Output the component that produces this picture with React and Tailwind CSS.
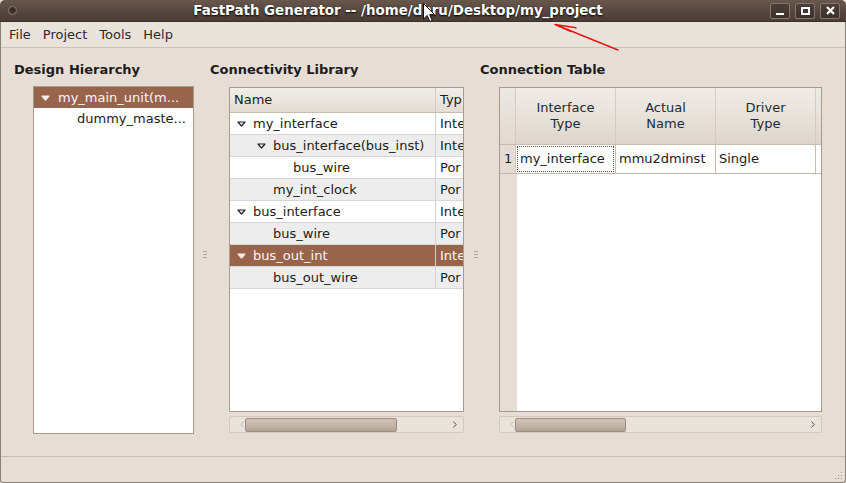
import React from "react";

function Tri({ white }) {
  return (
    <svg width="9" height="6" viewBox="0 0 9 6" className="shrink-0">
      <path d="M1 1H8L4.5 5Z" fill={white ? "#f4ece8" : "#ffffff"} stroke={white ? "#f4ece8" : "#1e1e1e"} strokeWidth="1.2" strokeLinejoin="round" />
    </svg>
  );
}

function Grip() {
  return (
    <div className="flex flex-col gap-[2px]">
      <div className="w-[4px] h-[1px] bg-[#b5a597]" />
      <div className="w-[4px] h-[1px] bg-[#b5a597]" />
      <div className="w-[4px] h-[1px] bg-[#b5a597]" />
    </div>
  );
}

function HScroll({ thumb, width }) {
  return (
    <div className={`mt-[4px] ml-[19px] h-[17px] rounded-[2px] border border-[#d3c9bf] bg-[#e9e3dc] flex items-center ${width}`}>
      <svg width="4" height="7" viewBox="0 0 4 7" className="ml-[10px] shrink-0">
        <path d="M3.5 0.5L0.8 3.5L3.5 6.5" fill="none" stroke="#c9bdb2" strokeWidth="1" />
      </svg>
      <div className={`ml-[1px] h-[14px] rounded-[2px] border border-[#9d8d80] bg-linear-to-b from-[#cfc3b8] via-[#c4b6a9] to-[#b4a497] ${thumb}`} />
      <div className="flex-1" />
      <svg width="4" height="7" viewBox="0 0 4 7" className="mr-[6px] shrink-0">
        <path d="M0.5 0.5L3.2 3.5L0.5 6.5" fill="none" stroke="#5e544c" strokeWidth="1" />
      </svg>
    </div>
  );
}

const libRows = [
  { lvl: 0, tri: true, name: "my_interface", type: "Inte" },
  { lvl: 1, tri: true, name: "bus_interface(bus_inst)", type: "Inte" },
  { lvl: 2, tri: false, name: "bus_wire", type: "Por" },
  { lvl: 1, tri: false, name: "my_int_clock", type: "Por" },
  { lvl: 0, tri: true, name: "bus_interface", type: "Inte" },
  { lvl: 1, tri: false, name: "bus_wire", type: "Por" },
  { lvl: 0, tri: true, name: "bus_out_int", type: "Inte", sel: true },
  { lvl: 1, tri: false, name: "bus_out_wire", type: "Por" },
];

const triIndent = ["pl-[7px]", "pl-[27px]", "pl-[47px]"];
const leafIndent = ["pl-[23px]", "pl-[43px]", "pl-[63px]"];

export default function App() {
  return (
    <div className="relative w-[846px] h-[483px] overflow-hidden flex flex-col bg-[#e6ded5] text-[13px] text-[#1c1c1c] font-['DejaVu_Sans','Liberation_Sans',sans-serif]">
      {/* Title bar */}
      <div className="h-[22px] shrink-0 flex items-center bg-linear-to-b from-[#68574c] via-[#574840] to-[#4a3d36] rounded-t-[5px] border-b border-[#3b302a]">
        <div className="w-[22px] pl-[8px] flex items-center">
          <div className="w-[9px] h-[9px] rounded-full border border-[#8a7b72] bg-linear-to-b from-[#2e2521] to-[#463a33]" />
        </div>
        <div className="flex-1 pl-[4px] text-center font-bold text-[13.4px] leading-[22px] text-white [text-shadow:0_1px_2px_#000]">
          FastPath Generator -- /home/dhru/Desktop/my_project
        </div>
        <div className="flex gap-[5px] pr-[6px]">
          <div className="w-[20px] h-[16px] rounded-[2px] border border-[#86776d] bg-linear-to-b from-[#4b3e37] to-[#3c312b] flex items-end justify-center pb-[3px]">
            <div className="w-[8px] h-[2px] bg-white" />
          </div>
          <div className="w-[20px] h-[16px] rounded-[2px] border border-[#86776d] bg-linear-to-b from-[#4b3e37] to-[#3c312b] flex items-center justify-center">
            <div className="w-[9px] h-[8px] border-2 border-white" />
          </div>
          <div className="w-[20px] h-[16px] rounded-[2px] border border-[#86776d] bg-linear-to-b from-[#4b3e37] to-[#3c312b] flex items-center justify-center">
            <svg width="9" height="9" viewBox="0 0 9 9">
              <path d="M1 1L8 8M8 1L1 8" stroke="#fff" strokeWidth="2.2" />
            </svg>
          </div>
        </div>
      </div>

      <div className="flex-1 flex flex-col border-x border-b border-[#8c7f75] rounded-b-[3px]">
        {/* Menu bar */}
        <div className="h-[26px] shrink-0 flex items-center pl-[8px] gap-[12px] bg-[#e9e3dc] border-b border-[#cdc2b6] text-[#2b2b2b]">
          <span>File</span>
          <span>Project</span>
          <span>Tools</span>
          <span>Help</span>
        </div>

        {/* Main */}
        <div className="flex-1 flex">
          {/* Design Hierarchy */}
          <div className="w-[199px] pl-[13px] pt-[14px] flex flex-col">
            <div className="h-[16px] leading-[16px] font-bold">Design Hierarchy</div>
            <div className="mt-[8px] ml-[19px] w-[161px] h-[348px] border border-[#ab9a8b] bg-white flex flex-col">
              <div className="h-[21px] flex items-center pl-[7px] gap-[8px] bg-[#98644c] text-[#fbf5f2] whitespace-nowrap">
                <Tri white />
                <span>my_main_unit(m...</span>
              </div>
              <div className="h-[21px] flex items-center pl-[43px] whitespace-nowrap">dummy_maste...</div>
            </div>
          </div>

          <div className="w-[10px] flex items-center justify-center pt-[4px]">
            <Grip />
          </div>

          {/* Connectivity Library */}
          <div className="w-[262px] pt-[14px] flex flex-col">
            <div className="h-[16px] leading-[16px] font-bold">Connectivity Library</div>
            <div className="mt-[9px] ml-[19px] w-[235px] h-[325px] border border-[#ab9a8b] bg-white flex flex-col overflow-hidden">
              <div className="h-[25px] shrink-0 flex border-b border-[#c7bcb1] bg-linear-to-b from-[#f1ede8] to-[#e4ddd5]">
                <div className="w-[206px] pl-[4px] flex items-center border-r border-[#d2c8be]">Name</div>
                <div className="flex-1 pl-[4px] flex items-center overflow-hidden whitespace-nowrap">Typ</div>
              </div>
              {libRows.map((r, i) => (
                <div
                  key={i}
                  className={`h-[22px] shrink-0 flex border-b border-[#d6d6d6] whitespace-nowrap ${
                    r.sel ? "bg-[#98644c] text-[#fbf5f2]" : i % 2 === 0 ? "bg-white" : "bg-[#ededed]"
                  }`}
                >
                  <div className={`w-[206px] flex items-center gap-[7px] border-r border-[#d2d2d2] ${r.tri ? triIndent[r.lvl] : leafIndent[r.lvl]}`}>
                    {r.tri && <Tri white={r.sel} />}
                    <span>{r.name}</span>
                  </div>
                  <div className="flex-1 pl-[4px] flex items-center overflow-hidden">{r.type}</div>
                </div>
              ))}
              <div className="flex-1 bg-white" />
            </div>
            <HScroll thumb="w-[152px]" width="w-[235px]" />
          </div>

          <div className="w-[8px] flex items-center justify-center pt-[4px]">
            <Grip />
          </div>

          {/* Connection Table */}
          <div className="flex-1 pt-[14px] flex flex-col">
            <div className="h-[16px] leading-[16px] font-bold">Connection Table</div>
            <div className="mt-[9px] ml-[19px] w-[323px] h-[325px] border border-[#ab9a8b] flex flex-col overflow-hidden bg-[#e6ded5]">
              <div className="h-[57px] shrink-0 flex border-b border-[#c7bcb1] bg-linear-to-b from-[#efebe6] via-[#e8e2db] to-[#ddd5cc] text-[#222a33] whitespace-nowrap">
                <div className="w-[16px] shrink-0 border-r border-[#d4cac0] bg-linear-to-b from-[#ece8e3] to-[#e1d9d1]" />
                {[["Interface", "Type"], ["Actual", "Name"], ["Driver", "Type"]].map((h, i) => (
                  <div key={i} className="w-[100px] shrink-0 border-r border-[#d4cac0] flex flex-col items-center justify-center leading-[16px]">
                    <span>{h[0]}</span>
                    <span>{h[1]}</span>
                  </div>
                ))}
                <div className="flex-1" />
              </div>
              <div className="h-[29px] shrink-0 flex border-b border-[#c2b6ab] whitespace-nowrap">
                <div className="w-[16px] shrink-0 border-r border-[#d4cac0] flex items-center pl-[4px] bg-[#e4dcd3]">1</div>
                <div className="w-[100px] shrink-0 bg-white border-r border-[#c9bdb2] flex">
                  <div className="flex-1 m-[1px] border border-dotted border-[#555] flex items-center pl-[2px]">my_interface</div>
                </div>
                <div className="w-[100px] shrink-0 bg-white border-r border-[#c9bdb2] flex items-center pl-[3px]">mmu2dminst</div>
                <div className="w-[100px] shrink-0 bg-white border-r border-[#c9bdb2] flex items-center pl-[3px]">Single</div>
                <div className="flex-1 bg-white" />
              </div>
              <div className="flex-1 flex">
                <div className="w-[17px] shrink-0 bg-[#e6ded5]" />
                <div className="flex-1 bg-white" />
              </div>
            </div>
            <HScroll thumb="w-[111px]" width="w-[323px]" />
          </div>
        </div>

        {/* Status bar */}
        <div className="h-[26px] shrink-0 border-t border-[#c6bbb0] flex justify-end items-end pr-[2px] pb-[2px]">
          <svg width="10" height="10" viewBox="0 0 10 10">
            {[[8, 2], [8, 5], [5, 5], [8, 8], [5, 8], [2, 8]].map(([x, y], i) => (
              <rect key={i} x={x} y={y} width="1" height="1" fill="#a8998c" />
            ))}
          </svg>
        </div>
      </div>

      {/* Red annotation arrow */}
      <svg className="absolute left-0 top-0 pointer-events-none" width="846" height="483">
        <path d="M618 50L555 24.5M555 24.5L576 27.8M555 24.5L571 31.5" fill="none" stroke="#e8140f" strokeWidth="1.4" strokeLinecap="round" />
      </svg>

      {/* Mouse cursor */}
      <svg className="absolute left-[423px] top-[3px] pointer-events-none" width="13" height="20" viewBox="0 0 13 20">
        <path d="M0.5 0.5V16L4.2 12.4L6.8 18.5L9.2 17.5L6.7 11.6H11.5Z" fill="#fff" stroke="#111" strokeWidth="1" strokeLinejoin="round" />
      </svg>
    </div>
  );
}
